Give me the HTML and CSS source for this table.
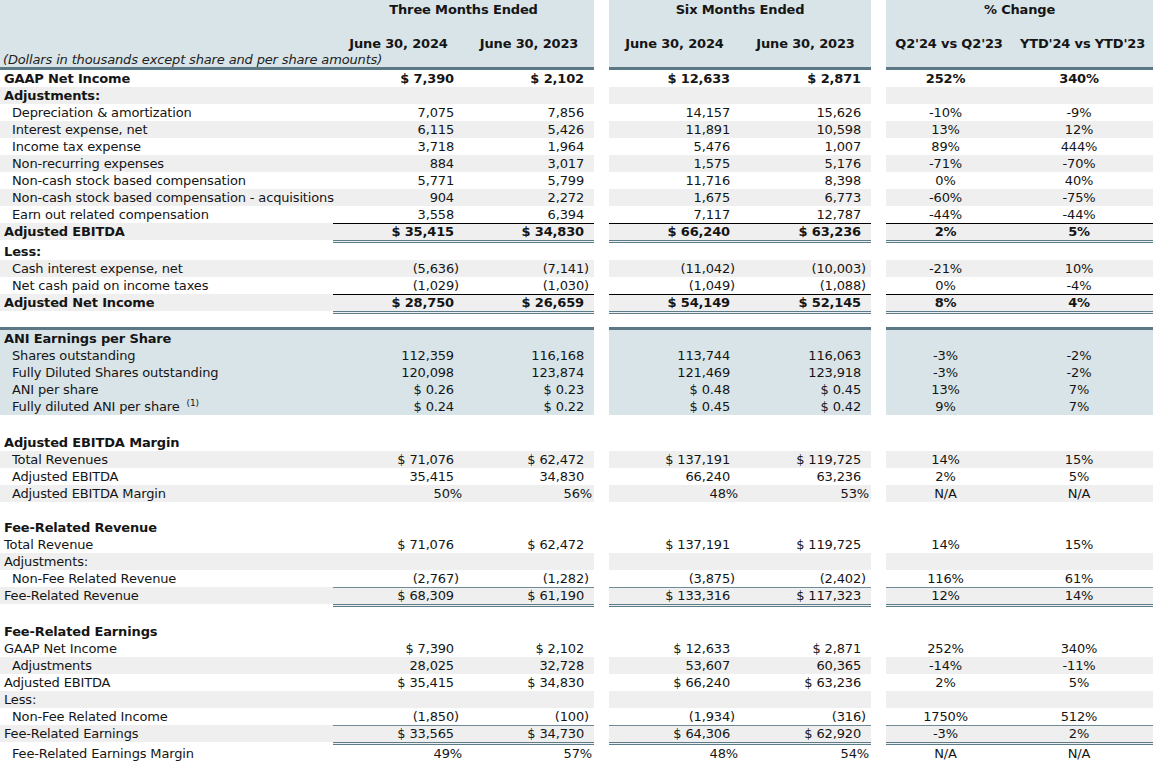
FILE: index.html
```html
<!DOCTYPE html>
<html lang="en">
<head>
<meta charset="utf-8">
<title>Non-GAAP Reconciliation</title>
<link rel="stylesheet" href="styles.css">
</head>
<body>
<table class="fin">
  <colgroup>
    <col class="w-lbl"><col class="w-c1"><col class="w-c2"><col class="w-gap">
    <col class="w-c3"><col class="w-c4"><col class="w-gap">
    <col class="w-c5"><col class="w-c6">
  </colgroup>
  <tbody>
    <tr class="hd hd1">
      <td></td><td class="ttl" colspan="2">Three Months Ended</td><td class="gap"></td>
      <td class="ttl" colspan="2">Six Months Ended</td><td class="gap"></td>
      <td class="ttl" colspan="2">% Change</td>
    </tr>
    <tr class="hd hd2">
      <td></td><td class="ttl">June 30, 2024</td><td class="ttl">June 30, 2023</td><td class="gap"></td>
      <td class="ttl">June 30, 2024</td><td class="ttl">June 30, 2023</td><td class="gap"></td>
      <td class="ttl">Q2'24 vs Q2'23</td><td class="ttl">YTD'24 vs YTD'23</td>
    </tr>
    <tr class="hd hd3">
      <td class="unit" colspan="3">(Dollars in thousands except share and per share amounts)</td><td class="gap"></td>
      <td colspan="2"></td><td class="gap"></td><td colspan="2"></td>
    </tr>

    <tr class="b">
      <td class="lbl">GAAP Net Income</td><td class="n">$ 7,390</td><td class="n">$ 2,102</td><td class="gap"></td>
      <td class="n">$ 12,633</td><td class="n">$ 2,871</td><td class="gap"></td><td class="p">252%</td><td class="p">340%</td>
    </tr>
    <tr class="alt">
      <td class="lbl b">Adjustments:</td><td class="n"></td><td class="n"></td><td class="gap"></td>
      <td class="n"></td><td class="n"></td><td class="gap"></td><td class="p"></td><td class="p"></td>
    </tr>
    <tr>
      <td class="lbl ind">Depreciation &amp; amortization</td><td class="n">7,075</td><td class="n">7,856</td><td class="gap"></td>
      <td class="n">14,157</td><td class="n">15,626</td><td class="gap"></td><td class="p">-10%</td><td class="p">-9%</td>
    </tr>
    <tr class="alt">
      <td class="lbl ind">Interest expense, net</td><td class="n">6,115</td><td class="n">5,426</td><td class="gap"></td>
      <td class="n">11,891</td><td class="n">10,598</td><td class="gap"></td><td class="p">13%</td><td class="p">12%</td>
    </tr>
    <tr>
      <td class="lbl ind">Income tax expense</td><td class="n">3,718</td><td class="n">1,964</td><td class="gap"></td>
      <td class="n">5,476</td><td class="n">1,007</td><td class="gap"></td><td class="p">89%</td><td class="p">444%</td>
    </tr>
    <tr class="alt">
      <td class="lbl ind">Non-recurring expenses</td><td class="n">884</td><td class="n">3,017</td><td class="gap"></td>
      <td class="n">1,575</td><td class="n">5,176</td><td class="gap"></td><td class="p">-71%</td><td class="p">-70%</td>
    </tr>
    <tr>
      <td class="lbl ind">Non-cash stock based compensation</td><td class="n">5,771</td><td class="n">5,799</td><td class="gap"></td>
      <td class="n">11,716</td><td class="n">8,398</td><td class="gap"></td><td class="p">0%</td><td class="p">40%</td>
    </tr>
    <tr class="alt">
      <td class="lbl ind">Non-cash stock based compensation - acquisitions</td><td class="n">904</td><td class="n">2,272</td><td class="gap"></td>
      <td class="n">1,675</td><td class="n">6,773</td><td class="gap"></td><td class="p">-60%</td><td class="p">-75%</td>
    </tr>
    <tr>
      <td class="lbl ind">Earn out related compensation</td><td class="n">3,558</td><td class="n">6,394</td><td class="gap"></td>
      <td class="n">7,117</td><td class="n">12,787</td><td class="gap"></td><td class="p">-44%</td><td class="p">-44%</td>
    </tr>
    <tr class="alt b tot">
      <td class="lbl">Adjusted EBITDA</td><td class="n">$ 35,415</td><td class="n">$ 34,830</td><td class="gap"></td>
      <td class="n">$ 66,240</td><td class="n">$ 63,236</td><td class="gap"></td><td class="p">2%</td><td class="p">5%</td>
    </tr>
    <tr>
      <td class="lbl b">Less:</td><td class="n"></td><td class="n"></td><td class="gap"></td>
      <td class="n"></td><td class="n"></td><td class="gap"></td><td class="p"></td><td class="p"></td>
    </tr>
    <tr class="alt">
      <td class="lbl ind">Cash interest expense, net</td><td class="n ng">(5,636)</td><td class="n ng">(7,141)</td><td class="gap"></td>
      <td class="n ng">(11,042)</td><td class="n ng">(10,003)</td><td class="gap"></td><td class="p">-21%</td><td class="p">10%</td>
    </tr>
    <tr>
      <td class="lbl ind">Net cash paid on income taxes</td><td class="n ng">(1,029)</td><td class="n ng">(1,030)</td><td class="gap"></td>
      <td class="n ng">(1,049)</td><td class="n ng">(1,088)</td><td class="gap"></td><td class="p">0%</td><td class="p">-4%</td>
    </tr>
    <tr class="alt b tot">
      <td class="lbl">Adjusted Net Income</td><td class="n">$ 28,750</td><td class="n">$ 26,659</td><td class="gap"></td>
      <td class="n">$ 54,149</td><td class="n">$ 52,145</td><td class="gap"></td><td class="p">8%</td><td class="p">4%</td>
    </tr>

    <tr class="sp sp13"><td colspan="9"></td></tr>

    <tr class="blue first">
      <td class="lbl b">ANI Earnings per Share</td><td class="n"></td><td class="n"></td><td class="gap"></td>
      <td class="n"></td><td class="n"></td><td class="gap"></td><td class="p"></td><td class="p"></td>
    </tr>
    <tr class="blue">
      <td class="lbl ind">Shares outstanding</td><td class="n">112,359</td><td class="n">116,168</td><td class="gap"></td>
      <td class="n">113,744</td><td class="n">116,063</td><td class="gap"></td><td class="p">-3%</td><td class="p">-2%</td>
    </tr>
    <tr class="blue">
      <td class="lbl ind">Fully Diluted Shares outstanding</td><td class="n">120,098</td><td class="n">123,874</td><td class="gap"></td>
      <td class="n">121,469</td><td class="n">123,918</td><td class="gap"></td><td class="p">-3%</td><td class="p">-2%</td>
    </tr>
    <tr class="blue">
      <td class="lbl ind">ANI per share</td><td class="n">$ 0.26</td><td class="n">$ 0.23</td><td class="gap"></td>
      <td class="n">$ 0.48</td><td class="n">$ 0.45</td><td class="gap"></td><td class="p">13%</td><td class="p">7%</td>
    </tr>
    <tr class="blue">
      <td class="lbl ind">Fully diluted ANI per share <sup class="fn">(1)</sup></td><td class="n">$ 0.24</td><td class="n">$ 0.22</td><td class="gap"></td>
      <td class="n">$ 0.45</td><td class="n">$ 0.42</td><td class="gap"></td><td class="p">9%</td><td class="p">7%</td>
    </tr>

    <tr class="sp sp19"><td colspan="9"></td></tr>

    <tr>
      <td class="lbl b">Adjusted EBITDA Margin</td><td class="n"></td><td class="n"></td><td class="gap"></td>
      <td class="n"></td><td class="n"></td><td class="gap"></td><td class="p"></td><td class="p"></td>
    </tr>
    <tr class="alt">
      <td class="lbl ind">Total Revenues</td><td class="n">$ 71,076</td><td class="n">$ 62,472</td><td class="gap"></td>
      <td class="n">$ 137,191</td><td class="n">$ 119,725</td><td class="gap"></td><td class="p">14%</td><td class="p">15%</td>
    </tr>
    <tr>
      <td class="lbl ind">Adjusted EBITDA</td><td class="n">35,415</td><td class="n">34,830</td><td class="gap"></td>
      <td class="n">66,240</td><td class="n">63,236</td><td class="gap"></td><td class="p">2%</td><td class="p">5%</td>
    </tr>
    <tr class="alt">
      <td class="lbl ind">Adjusted EBITDA Margin</td><td class="n pc">50%</td><td class="n pc">56%</td><td class="gap"></td>
      <td class="n pc">48%</td><td class="n pc">53%</td><td class="gap"></td><td class="p">N/A</td><td class="p">N/A</td>
    </tr>

    <tr class="sp sp17"><td colspan="9"></td></tr>

    <tr>
      <td class="lbl b">Fee-Related Revenue</td><td class="n"></td><td class="n"></td><td class="gap"></td>
      <td class="n"></td><td class="n"></td><td class="gap"></td><td class="p"></td><td class="p"></td>
    </tr>
    <tr>
      <td class="lbl">Total Revenue</td><td class="n">$ 71,076</td><td class="n">$ 62,472</td><td class="gap"></td>
      <td class="n">$ 137,191</td><td class="n">$ 119,725</td><td class="gap"></td><td class="p">14%</td><td class="p">15%</td>
    </tr>
    <tr class="alt">
      <td class="lbl">Adjustments:</td><td class="n"></td><td class="n"></td><td class="gap"></td>
      <td class="n"></td><td class="n"></td><td class="gap"></td><td class="p"></td><td class="p"></td>
    </tr>
    <tr>
      <td class="lbl ind">Non-Fee Related Revenue</td><td class="n ng">(2,767)</td><td class="n ng">(1,282)</td><td class="gap"></td>
      <td class="n ng">(3,875)</td><td class="n ng">(2,402)</td><td class="gap"></td><td class="p">116%</td><td class="p">61%</td>
    </tr>
    <tr class="alt tot tot2">
      <td class="lbl">Fee-Related Revenue</td><td class="n">$ 68,309</td><td class="n">$ 61,190</td><td class="gap"></td>
      <td class="n">$ 133,316</td><td class="n">$ 117,323</td><td class="gap"></td><td class="p">12%</td><td class="p">14%</td>
    </tr>

    <tr class="sp sp16"><td colspan="9"></td></tr>

    <tr>
      <td class="lbl b">Fee-Related Earnings</td><td class="n"></td><td class="n"></td><td class="gap"></td>
      <td class="n"></td><td class="n"></td><td class="gap"></td><td class="p"></td><td class="p"></td>
    </tr>
    <tr>
      <td class="lbl">GAAP Net Income</td><td class="n">$ 7,390</td><td class="n">$ 2,102</td><td class="gap"></td>
      <td class="n">$ 12,633</td><td class="n">$ 2,871</td><td class="gap"></td><td class="p">252%</td><td class="p">340%</td>
    </tr>
    <tr class="alt">
      <td class="lbl ind">Adjustments</td><td class="n">28,025</td><td class="n">32,728</td><td class="gap"></td>
      <td class="n">53,607</td><td class="n">60,365</td><td class="gap"></td><td class="p">-14%</td><td class="p">-11%</td>
    </tr>
    <tr>
      <td class="lbl">Adjusted EBITDA</td><td class="n">$ 35,415</td><td class="n">$ 34,830</td><td class="gap"></td>
      <td class="n">$ 66,240</td><td class="n">$ 63,236</td><td class="gap"></td><td class="p">2%</td><td class="p">5%</td>
    </tr>
    <tr class="alt">
      <td class="lbl">Less:</td><td class="n"></td><td class="n"></td><td class="gap"></td>
      <td class="n"></td><td class="n"></td><td class="gap"></td><td class="p"></td><td class="p"></td>
    </tr>
    <tr>
      <td class="lbl ind">Non-Fee Related Income</td><td class="n ng">(1,850)</td><td class="n ng">(100)</td><td class="gap"></td>
      <td class="n ng">(1,934)</td><td class="n ng">(316)</td><td class="gap"></td><td class="p">1750%</td><td class="p">512%</td>
    </tr>
    <tr class="alt tot tot2">
      <td class="lbl">Fee-Related Earnings</td><td class="n">$ 33,565</td><td class="n">$ 34,730</td><td class="gap"></td>
      <td class="n">$ 64,306</td><td class="n">$ 62,920</td><td class="gap"></td><td class="p">-3%</td><td class="p">2%</td>
    </tr>
    <tr>
      <td class="lbl ind">Fee-Related Earnings Margin</td><td class="n pc">49%</td><td class="n pc">57%</td><td class="gap"></td>
      <td class="n pc">48%</td><td class="n pc">54%</td><td class="gap"></td><td class="p">N/A</td><td class="p">N/A</td>
    </tr>
  </tbody>
</table>
</body>
</html>
```
FILE: styles.css
```css
* { box-sizing: border-box; }
html, body { margin: 0; padding: 0; background: #fff; }
body {
  font-family: "DejaVu Sans", Verdana, sans-serif;
  font-size: 13px;
  letter-spacing: -0.15px;
  color: #151515;
}

.fin {
  width: 1153px;
  table-layout: fixed;
  border-collapse: separate;
  border-spacing: 0;
}
.w-lbl { width: 333px; }
.w-c1 { width: 131px; }
.w-c2 { width: 130px; }
.w-gap { width: 15px; }
.w-c3 { width: 131px; }
.w-c4 { width: 131px; }
.w-c5 { width: 126px; }
.w-c6 { width: 141px; }

.fin td {
  padding: 0;
  line-height: 17px;
  vertical-align: top;
  white-space: nowrap;
  overflow: visible;
}

.lbl { padding-left: 4px !important; }
.ind { padding-left: 12px !important; }
.n { text-align: right; padding-right: 10px !important; }
.n.ng { padding-right: 5px !important; }
.n.pc { padding-right: 2px !important; }
.p { text-align: center; padding-right: 7px !important; }
.b, .b td { font-weight: bold; }

/* header band */
.hd td:not(.gap) { background: #d9e4e8; }
.hd .ttl { text-align: center; font-weight: bold; }
.hd1 td { line-height: 18px; padding-top: 1px; }
.hd2 td { padding-top: 16px; }
.hd3 td { line-height: 15px; }
.hd3 td:not(.gap) { border-bottom: 3px solid #5b7884; }
.unit { font-style: italic; padding-left: 3px !important; color: #222; }

/* banded rows */
.alt td:not(.gap) { background: #efefef; }
.blue td:not(.gap) { background: #d9e4e8; }
.first td:not(.gap) { border-top: 3px solid #5b7884; }

/* totals */
.tot td { line-height: 16px; }
.tot td.n, .tot td.p {
  border-top: 1px solid #000;
  border-bottom: 3px double #5c7c89;
}
.tot td.lbl {
  border-top: 1px solid transparent;
  border-bottom: 3px solid #fff;
}
.tot2 td.n, .tot2 td.p { border-top-color: #6f8b97; }

/* spacers */
.sp td { line-height: 0; padding: 0; background: #fff; }
.sp13 td { height: 13px; }
.sp16 td { height: 16px; }
.sp17 td { height: 17px; }
.sp19 td { height: 19px; }

.fn {
  font-size: 9px;
  line-height: 0;
  vertical-align: 5px;
  margin-left: 3px;
}
```
